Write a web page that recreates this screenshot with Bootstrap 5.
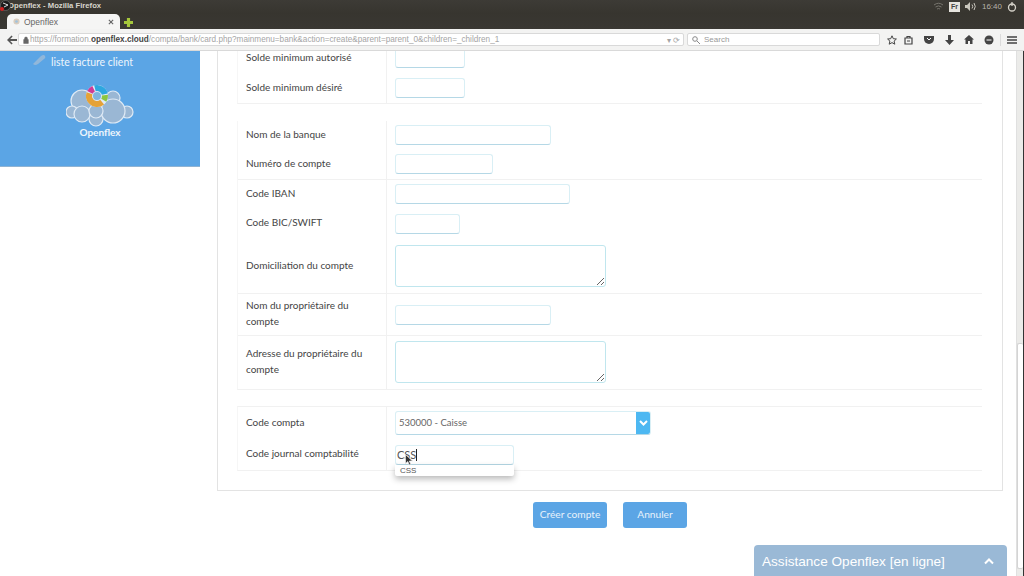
<!DOCTYPE html>
<html lang="fr">
<head>
    <meta charset="UTF-8">
    <meta name="viewport" content="width=device-width, initial-scale=1.0">
    <title>Openflex - Mozilla Firefox</title>
    <link href="https://cdn.jsdelivr.net/npm/bootstrap@5.3.0/dist/css/bootstrap.min.css" rel="stylesheet">
    <style>
        html, body { height: 576px; overflow: hidden; background: #fff; }
        body { font-family: "Lato", "Open Sans", sans-serif; font-size: 10px; color: #444; position: relative; }

        /* barre de titre ubuntu */
        .ff-title { height: 13px; background: linear-gradient(#3d3b36, #37352f); color: #d8d5cc; font: 700 7.700px "Liberation Sans", sans-serif; padding-left: 8px; line-height: 12px; }
        .ff-tray { gap: 5px; padding-right: 7px; color: #b5b2a9; font-weight: 400; font-size: 8px; }
        .ff-lang { background: #e6e4de; color: #444; font-size: 7px; font-weight: 700; width: 11px; height: 10px; line-height: 10px; text-align: center; }
        .ff-tabs { height: 16px; background: linear-gradient(#37352f, #3a3833); padding: 1px 0 0 7px; }
        .ff-tab { width: 113px; height: 15px; background: #f5f5f4; border-radius: 5px 5px 0 0; font: 8.500px "Liberation Sans", sans-serif; color: #666; padding: 0 6px 0 6px; }
        .ff-nav { height: 22px; background: #f3f3f2; border-bottom: 1px solid #d9d9d9; padding: 0 7px 0 7px; }
        .ff-back { margin-right: 1px; }
        .ff-url { height: 13px; width: 666px; background: #fff; border: 1px solid #d9d9d9; border-radius: 2px; font: 8.200px "Liberation Sans", sans-serif; color: #a5a5a5; padding: 0 3px 0 4px; white-space: nowrap; overflow: hidden; }
        .ff-url b { color: #444; }
        .ff-url svg { margin-right: 1px; }
        .ff-search { height: 13px; width: 193px; margin-left: 3px; background: #fff; border: 1px solid #d9d9d9; border-radius: 2px; font: 8px "Liberation Sans", sans-serif; color: #999; padding-left: 4px; }
        .ff-tools { margin-left: 7px; gap: 10px; flex: 1; }
        .ff-tools svg { flex: none; }
        .ff-closer { margin-left: -3px; }
        .ff-wider { margin-left: 1px; }
        .ff-sep { width: 1px; height: 12px; background: #dcdcdc; margin-left: -4px; }
        .ff-menu { margin-left: -4px; }

        /* page */
        .page-zone { height: 526px; overflow: hidden; }
        .side-box { width: 200px; height: 116px; background: #5ba5e5; color: #fff; flex: none; border-bottom: 1px solid #8fb3d3; }
        .side-link { font-size: 10.500px; color: #eef5fc; padding: 1px 0 0 51px; height: 30px; line-height: 20px; position: relative; }
        .side-link svg { position: absolute; left: 32px; top: 3px; opacity: .7; }
        .side-name { font-size: 10px; font-weight: 700; color: #eef5fc; line-height: 12px; margin-top: -1px; }
        .main-zone { width: 786px; margin-left: 17px; flex: none; }
        .form-box { display: flow-root; border: 1px solid #e3e3e3; border-top: 0; height: 440px; padding: 0 20px 0 19px; }
        .tbl-part { border-bottom: 1px solid #f1f1f1; border-left: 1px solid #f6f6f6; }
        .tbl-first { margin-top: -8px; }
        .tbl-top { border-top: 1px solid #f1f1f1; }
        .tbl-row { display: flex; }
        .sep-row { border-bottom: 1px solid #f1f1f1; }
        .lbl-cell { width: 149px; flex: none; border-right: 1px solid #f1f1f1; padding: 0 8px 3px; display: flex; align-items: center; line-height: 16px; color: #444; }
        .val-cell { padding-left: 8px; display: flex; align-items: center; flex: 1; }
        .inp-x { height: 20px; background: #fff; border: 1px solid #d9eff5; border-bottom-color: #b5d8e6; border-radius: 3px; padding: 0; }
        .txt-x { background: #fff; border: 1px solid #c0e6ee; border-radius: 3px; height: 42px; width: 211px; display: block; }
        .txt-up { margin-bottom: 2px; }
        .sel-x { width: 256px; height: 24px; border: 1px solid #d9eff5; border-bottom-color: #b5d8e6; border-radius: 3px; overflow: hidden; font-size: 9.500px; color: #666; padding-left: 3px; }
        .sel-arrow { width: 15px; height: 24px; background: #4db8f2; margin-left: auto; margin-right: -1px; }
        .auto-wrap { position: relative; width: 119px; }
        .auto-inp { width: 119px; height: 20px; border: 1px solid #d9eff5; border-bottom-color: #b5d8e6; border-radius: 3px; font-size: 11px; color: #555; padding-left: 1px; line-height: 18px; }
        .caret-x { display: inline-block; width: 1px; height: 12px; background: #222; vertical-align: -2px; }
        .auto-menu { position: absolute; left: 0; top: 20px; width: 119px; height: 11px; background: #fff; box-shadow: 0 3px 6px rgba(0,0,0,.28); font: 8px "Liberation Sans", sans-serif; color: #555; padding-left: 5px; line-height: 11px; border-radius: 0 0 2px 2px; }
        .cursor-x { position: absolute; left: 10px; top: 9px; }
        .btn-row { margin-top: 11px; gap: 16px; }
        .act-btn { background: #5ba5e5; border: 0; font-size: 10.200px; height: 26px; border-radius: 3px; padding: 0; color: #e8f2fb; }
        .btn-create { width: 74px; }
        .btn-cancel { width: 64px; }
        .scroll-x { width: 8px; margin-left: 13px; flex: none; height: 526px; background: #ebebe9; border-left: 1px solid #e0e0e0; border-right: 1px solid #333; position: relative; }
        .scroll-thumb { position: absolute; left: 0; right: 0; top: 292px; height: 226px; background: #fff; border: 1px solid #d4d4d4; border-right: 0; border-radius: 2px; }
        .chat-tab { position: absolute; left: 754px; bottom: 0; width: 253px; height: 31px; background: #9ab9d6; color: #fff; border-radius: 4px 4px 0 0; font: 13.600px/33px "Liberation Sans", sans-serif; padding-left: 8px; }
        .chat-tab svg { position: absolute; right: 13px; top: 13px; }
    </style>
</head>
<body>
    <!-- fenetre firefox -->
    <div class="ff-title d-flex justify-content-between">
        <span>Openflex - Mozilla Firefox</span>
        <div class="ff-tray d-flex align-items-center">
            <svg width="11" height="9" viewBox="0 0 11 9"><path d="M1 3q4.500-3.500 9 0M2.500 5q3-2.200 6 0M4 7q1.500-1 3 0" fill="none" stroke="#77756e"/></svg>
            <span class="ff-lang">Fr</span>
            <svg width="12" height="9" viewBox="0 0 12 9"><path d="M0 3h2l3-3v9l-3-3H0z" fill="#c9c6bd"/><path d="M7 2.500q1.500 2 0 4M9 1q2.500 3.500 0 7" fill="none" stroke="#c9c6bd"/></svg>
            <span>16:40</span>
            <svg width="10" height="10" viewBox="0 0 10 10"><circle cx="5" cy="5.500" r="3.500" fill="none" stroke="#d8d5cc" stroke-width="1.300"/><path d="M5 0v4" stroke="#d8d5cc" stroke-width="1.300"/></svg>
        </div>
    </div>
    <div class="ff-tabs d-flex">
        <div class="ff-tab d-flex align-items-center">
            <svg class="me-1" width="7" height="7" viewBox="0 0 8 8"><circle cx="4" cy="4" r="3.500" fill="#d9cdbf"/><circle cx="4" cy="4" r="1.500" fill="#9fc2dd"/></svg>
            <span>Openflex</span>
            <svg class="ms-auto" width="6" height="6" viewBox="0 0 7 7"><path d="M1 1l5 5M6 1l-5 5" stroke="#666" stroke-width="1.300"/></svg>
        </div>
        <svg class="ms-1 mt-1" width="9" height="9" viewBox="0 0 10 10"><path d="M5 0v10M0 5h10" stroke="#a5c63b" stroke-width="3.500"/></svg>
    </div>
    <div class="ff-nav d-flex align-items-center">
        <svg class="ff-back" width="10" height="10" viewBox="0 0 11 10"><path d="M5 0l1.200 1.200L3.500 4H11v2H3.500l2.700 2.800L5 10 0 5z" fill="#555"/></svg>
        <div class="ff-url d-flex align-items-center">
            <svg width="6" height="8" viewBox="0 0 7 8"><path d="M1.800 3.500V2.200a1.700 1.700 0 0 1 3.400 0v1.300M.8 3.500h5.400V8H.8z" fill="#666" stroke="#666" stroke-width=".6"/></svg>
            <span>https://formation.<b>openflex.cloud</b>/compta/bank/card.php?mainmenu=bank&amp;action=create&amp;parent=parent_0&amp;children=_children_1</span>
            <span class="ms-auto ps-1">▾ ⟳</span>
        </div>
        <div class="ff-search d-flex align-items-center">
            <svg width="8" height="8" viewBox="0 0 8 8"><circle cx="3" cy="3" r="2.300" fill="none" stroke="#888"/><path d="M5 5l3 3" stroke="#888"/></svg>
            <span class="ps-1">Search</span>
        </div>
        <div class="ff-tools d-flex align-items-center">
            <svg width="10" height="10" viewBox="0 0 10 10"><path d="M5 .8l1.300 2.900 3.100.3-2.300 2.100.7 3.100L5 7.600 2.200 9.200l.7-3.100L.6 4l3.100-.3z" fill="none" stroke="#444"/></svg>
            <svg class="ff-closer" width="9" height="10" viewBox="0 0 9 10"><path d="M3 1.500h3V3H3zM1 3h7v6H1z" fill="none" stroke="#444" stroke-width="1.200"/><path d="M3 6h3" stroke="#444"/></svg>
            <svg class="ff-wider" width="10" height="9" viewBox="0 0 10 9"><path d="M0 1h10v3a5 5 0 0 1-10 0z" fill="#444"/><path d="M3 3l2 2 2-2" fill="none" stroke="#fff"/></svg>
            <svg class="ff-wider" width="9" height="10" viewBox="0 0 9 10"><path d="M3 0h3v5h3L4.500 10 0 5h3z" fill="#444"/></svg>
            <svg width="10" height="9" viewBox="0 0 10 9"><path d="M5 0l5 4.500H8.500V9H6V6H4v3H1.500V4.500H0z" fill="#444"/></svg>
            <svg width="10" height="10" viewBox="0 0 10 10"><circle cx="5" cy="5" r="4.500" fill="#444"/><path d="M2.500 5h5" stroke="#fff"/></svg>
            <span class="ff-sep"></span>
            <svg class="ff-menu" width="10" height="8" viewBox="0 0 10 8"><path d="M0 1h10M0 4h10M0 7h10" stroke="#444" stroke-width="1.500"/></svg>
        </div>
    </div>

    <!-- contenu de la page -->
    <div class="page-zone d-flex">
        <div class="side-box">
            <div class="side-link">
                <svg width="14" height="12" viewBox="0 0 14 12"><path d="M1 10L9 2q3-2 4 0t-1 3l-6 5q-3 2-5 0z" fill="#a9bfd6"/></svg>
                liste facture client
            </div>
            <div class="text-center">
                <svg width="68" height="46" viewBox="0 0 68 46" class="d-block mx-auto">
                    <g fill="#9ab7d4" stroke="#dfeaf5" stroke-width="1.200">
                        <circle cx="47" cy="17" r="7"/>
                        <circle cx="16" cy="20" r="11"/>
                        <circle cx="6" cy="31" r="6"/>
                        <circle cx="61" cy="31" r="6"/>
                        <circle cx="30" cy="38" r="7"/>
                        <circle cx="16" cy="33" r="8"/>
                        <circle cx="47" cy="30" r="12"/>
                        <circle cx="30" cy="30" r="7"/>
                    </g>
                    <!-- anneau du logo -->
                    <circle cx="31" cy="15" r="11" fill="#dfeaf5"/>
                    <circle cx="31" cy="15" r="4" fill="#7fb4de"/>
                    <g fill="none" stroke-width="6">
                        <circle cx="31" cy="15" r="8" stroke="#e5a238" pathLength="360" stroke-dasharray="150 360" transform="rotate(50 31 15)"/>
                        <circle cx="31" cy="15" r="8" stroke="#cf3b96" pathLength="360" stroke-dasharray="38 360" transform="rotate(207 31 15)"/>
                        <circle cx="31" cy="15" r="8" stroke="#2ea7df" pathLength="360" stroke-dasharray="92 360" transform="rotate(255 31 15)"/>
                        <circle cx="31" cy="15" r="8" stroke="#8cc63f" pathLength="360" stroke-dasharray="38 360" transform="rotate(354 31 15)"/>
                    </g>
                </svg>
                <div class="side-name">Openflex</div>
            </div>
        </div>
        <div class="main-zone">
            <div class="form-box">
                <div class="tbl-part tbl-first">
                    <div class="tbl-row" style="height:30px"><div class="lbl-cell"><span>Solde minimum autorisé</span></div><div class="val-cell"><input class="inp-x" style="width:70px" type="text"></div></div>
                    <div class="tbl-row" style="height:30px"><div class="lbl-cell"><span>Solde minimum désiré</span></div><div class="val-cell"><input class="inp-x" style="width:70px" type="text"></div></div>
                </div>
                <div style="height:17px"></div>
                <div class="tbl-part">
                    <div class="tbl-row" style="height:28px"><div class="lbl-cell"><span>Nom de la banque</span></div><div class="val-cell"><input class="inp-x" style="width:156px" type="text"></div></div>
                    <div class="tbl-row sep-row" style="height:31px"><div class="lbl-cell"><span>Numéro de compte</span></div><div class="val-cell"><input class="inp-x" style="width:98px" type="text"></div></div>
                    <div class="tbl-row" style="height:28px"><div class="lbl-cell"><span>Code IBAN</span></div><div class="val-cell"><input class="inp-x" style="width:175px" type="text"></div></div>
                    <div class="tbl-row" style="height:31px"><div class="lbl-cell"><span>Code BIC/SWIFT</span></div><div class="val-cell"><input class="inp-x" style="width:65px" type="text"></div></div>
                    <div class="tbl-row sep-row" style="height:55px"><div class="lbl-cell"><span>Domiciliation du compte</span></div><div class="val-cell"><textarea class="txt-x"></textarea></div></div>
                    <div class="tbl-row sep-row" style="height:42px"><div class="lbl-cell"><span>Nom du propriétaire du compte</span></div><div class="val-cell"><input class="inp-x" style="width:156px" type="text"></div></div>
                    <div class="tbl-row" style="height:53px"><div class="lbl-cell"><span>Adresse du propriétaire du compte</span></div><div class="val-cell"><textarea class="txt-x txt-up"></textarea></div></div>
                </div>
                <div style="height:16px"></div>
                <div class="tbl-part tbl-top">
                    <div class="tbl-row" style="height:32px"><div class="lbl-cell"><span>Code compta</span></div>
                        <div class="val-cell">
                            <div class="sel-x d-flex align-items-center">530000 - Caisse
                                <div class="sel-arrow d-flex align-items-center justify-content-center"><svg width="9" height="6" viewBox="0 0 9 6"><path d="M1 1l3.500 3.500L8 1" fill="none" stroke="#fff" stroke-width="2"/></svg></div>
                            </div>
                        </div>
                    </div>
                    <div class="tbl-row" style="height:31px"><div class="lbl-cell"><span>Code journal comptabilité</span></div>
                        <div class="val-cell">
                            <div class="auto-wrap">
                                <div class="auto-inp">CSS<span class="caret-x"></span></div>
                                <div class="auto-menu">CSS</div>
                                <svg class="cursor-x" width="8" height="12" viewBox="0 0 8 12"><path d="M.5.500v9l2.300-2 1.500 3.500 1.500-.7L4.300 7H7.500z" fill="#333" stroke="#eee" stroke-width=".7"/></svg>
                            </div>
                        </div>
                    </div>
                </div>
            </div>
            <div class="btn-row d-flex justify-content-center">
                <button class="act-btn btn-create" type="button">Créer compte</button>
                <button class="act-btn btn-cancel" type="button">Annuler</button>
            </div>
        </div>
        <div class="scroll-x"><div class="scroll-thumb"></div></div>
    </div>

    <div class="chat-tab">Assistance Openflex [en ligne]
        <svg width="10" height="7" viewBox="0 0 10 7"><path d="M1 5.500l4-4 4 4" fill="none" stroke="#fff" stroke-width="2"/></svg>
    </div>

    <!-- logo ubuntu par dessus le titre -->
    <svg class="position-absolute top-0 start-0" width="11" height="12" viewBox="0 0 11 12">
        <circle cx="5.500" cy="5.500" r="5" fill="#1b1b1b" stroke="#777" stroke-width=".6"/>
        <circle cx="2" cy="9" r="2" fill="#d32020"/>
        <path d="M3 3l5 2-4 2" fill="none" stroke="#ddd"/>
    </svg>

    <script src="https://cdn.jsdelivr.net/npm/bootstrap@5.3.0/dist/js/bootstrap.bundle.min.js"></script>
</body>
</html>
